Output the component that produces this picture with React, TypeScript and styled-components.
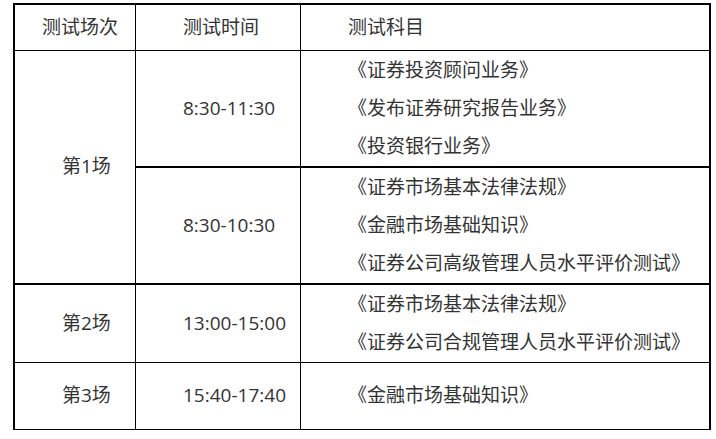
import * as React from 'react';
import styled, { createGlobalStyle } from 'styled-components';

const GlobalStyle = createGlobalStyle`
  html, body {
    margin: 0;
    padding: 0;
    background: #ffffff;
  }
`;

const Root = styled.div`
  padding: 3px 0 0 13px;
  font-family: 'Open Sans', 'Noto Sans CJK SC', sans-serif;
  font-size: 19px;
  color: #333333;
`;

const Table = styled.div`
  display: grid;
  width: 698px;
  box-sizing: border-box;
  grid-template-columns: 121px 165px 408px;
  grid-template-rows: 46px 117px 117px 78px 67px;
  border: 2px solid #000;
  border-bottom: none;
`;

interface CellProps {
  $pad: number;
  $bottom: number;
  $last?: boolean;
  $span?: number;
}

const Cell = styled.div<CellProps>`
  box-sizing: border-box;
  display: flex;
  flex-direction: column;
  justify-content: center;
  padding: 0 0 2px ${(p) => p.$pad}px;
  border-bottom: ${(p) => p.$bottom}px solid #000;
  border-right: ${(p) => (p.$last ? 'none' : '1px solid #000')};
  grid-row: ${(p) => (p.$span ? `span ${p.$span}` : 'auto')};
  line-height: 38px;
  white-space: nowrap;
`;

interface Slot {
  time: string;
  subjects: string[];
}

interface Session {
  name: string;
  slots: Slot[];
  bottom: number;
}

const sessions: Session[] = [
  {
    name: '第1场',
    bottom: 2,
    slots: [
      {
        time: '8:30-11:30',
        subjects: ['《证券投资顾问业务》', '《发布证券研究报告业务》', '《投资银行业务》'],
      },
      {
        time: '8:30-10:30',
        subjects: ['《证券市场基本法律法规》', '《金融市场基础知识》', '《证券公司高级管理人员水平评价测试》'],
      },
    ],
  },
  {
    name: '第2场',
    bottom: 1,
    slots: [
      {
        time: '13:00-15:00',
        subjects: ['《证券市场基本法律法规》', '《证券公司合规管理人员水平评价测试》'],
      },
    ],
  },
  {
    name: '第3场',
    bottom: 1,
    slots: [{ time: '15:40-17:40', subjects: ['《金融市场基础知识》'] }],
  },
];

export default function App() {
  return (
    <Root>
      <GlobalStyle />
      <Table>
        <Cell $pad={27} $bottom={1}>测试场次</Cell>
        <Cell $pad={47} $bottom={1}>测试时间</Cell>
        <Cell $pad={47} $bottom={1} $last>测试科目</Cell>

        {sessions.map((s) => (
          <React.Fragment key={s.name}>
            <Cell $pad={47} $bottom={s.bottom} $span={s.slots.length}>
              {s.name}
            </Cell>
            {s.slots.map((slot) => (
              <React.Fragment key={slot.time + slot.subjects[0]}>
                <Cell $pad={47} $bottom={s.bottom}>{slot.time}</Cell>
                <Cell $pad={47} $bottom={s.bottom} $last>
                  {slot.subjects.map((sub) => (
                    <div key={sub}>{sub}</div>
                  ))}
                </Cell>
              </React.Fragment>
            ))}
          </React.Fragment>
        ))}
      </Table>
    </Root>
  );
}
